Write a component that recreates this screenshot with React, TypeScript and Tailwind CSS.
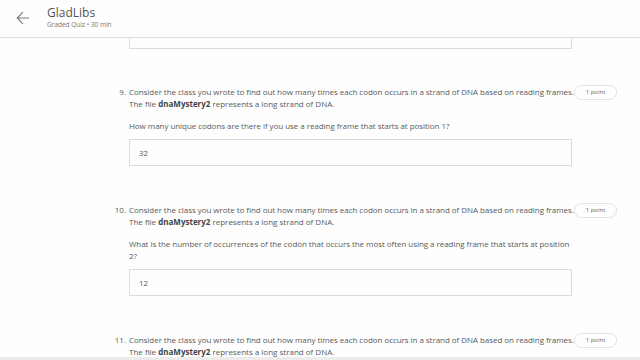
import React from 'react'

type Q = {
  num: number
  prompt: string
  answer?: string
}

const questions: Q[] = [
  { num: 9, prompt: 'How many unique codons are there if you use a reading frame that starts at position 1?', answer: '32' },
  { num: 10, prompt: 'What is the number of occurrences of the codon that occurs the most often using a reading frame that starts at position 2?', answer: '12' },
  { num: 11, prompt: '' },
]

const Question = ({ num, prompt, answer }: Q) => {
  return (
    <div className="flex flex-row items-start">
      <div className="w-[129px] pr-[3px] text-right text-[8px] leading-[12px]">{num}.</div>
      <div className="w-[443px] flex flex-col">
        <p className="text-[8px] leading-[12px] tracking-[-0.05px] whitespace-nowrap">
          Consider the class you wrote to find out how many times each codon occurs in a strand of DNA based on reading frames.
        </p>
        <p className="text-[8px] leading-[12px]">
          The file <span className="font-bold text-[#444]">dnaMystery2</span> represents a long strand of DNA.
        </p>
        {prompt && (
          <>
            <p className="mt-[10px] text-[8px] leading-[12px] tracking-[-0.05px] pr-[2px]">{prompt}</p>
            <div className="mt-[7px] h-[27px] border border-[#dcdcdc] flex items-center px-[9px] text-[8px]">
              {answer}
            </div>
          </>
        )}
      </div>
      <div className="ml-[2px] mt-[-1px] h-[15px] w-[43px] rounded-full border border-[#e2e2e2] flex items-center justify-center text-[6px] text-[#666]">
        1 point
      </div>
    </div>
  )
}

export default function App() {
  return (
    <div className="relative w-[640px] h-[360px] overflow-hidden bg-[#fdfefd] text-[#5a5a5a] flex flex-col" style={{ fontFamily: '"Open Sans", "Liberation Sans", sans-serif' }}>
      <header className="h-[38px] shrink-0 border-b border-[#dedede] flex flex-row items-center">
        <svg className="ml-[16px] mt-[-2px]" width="14" height="14" viewBox="0 0 14 14" fill="none" stroke="#777" strokeWidth="1.1">
          <path d="M13 7H1.5M7 1.2L1.2 7L7 12.8" />
        </svg>
        <div className="ml-[17px] mt-[-4px] flex flex-col">
          <span className="text-[12px] leading-[15px] text-[#555]">GladLibs</span>
          <span className="text-[6.5px] leading-[9px] text-[#777]">Graded Quiz • 30 min</span>
        </div>
      </header>
      <div className="flex flex-col">
        <div className="ml-[129px] w-[443px] h-[11px] border-x border-b border-[#dcdcdc]" />
        <div className="mt-[37px] flex flex-col gap-[38px]">
          {questions.map(q => (
            <Question key={q.num} {...q} />
          ))}
        </div>
      </div>
      <div className="absolute left-0 right-0 bottom-0 h-[3px] bg-[#ececec]" />
    </div>
  )
}
